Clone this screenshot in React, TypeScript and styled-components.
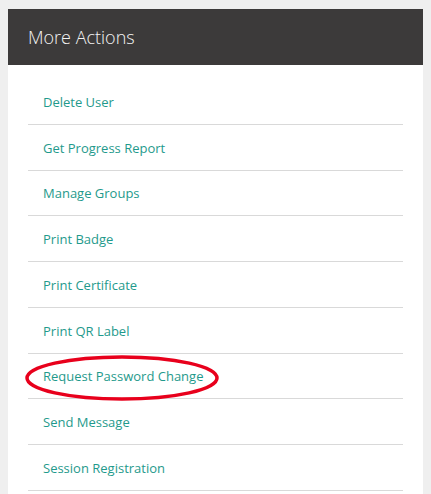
import React from 'react';
import styled, { createGlobalStyle } from 'styled-components';

const actions = [
    "Delete User",
    "Get Progress Report",
    "Manage Groups",
    "Print Badge",
    "Print Certificate",
    "Print QR Label",
    "Request Password Change",
    "Send Message",
    "Session Registration",
];

const highlighted = "Request Password Change";

export default function App() {
    return (
        <>
            <GlobalStyle />
            <SPanel>
                <SPanelHeader>More Actions</SPanelHeader>
                <SActionList>
                    {actions.map((name) => (
                        <SActionItem key={name}>
                            <SActionLink href="#">{name}</SActionLink>
                            {name === highlighted && (
                                <SCircle viewBox="0 0 194 46" preserveAspectRatio="none">
                                    <ellipse cx="97" cy="23" rx="95" ry="21" fill="none" stroke="#e8001c" strokeWidth="3.5" />
                                </SCircle>
                            )}
                        </SActionItem>
                    ))}
                </SActionList>
            </SPanel>
        </>
    );
}

const GlobalStyle = createGlobalStyle`
    html, body {
        margin: 0;
        padding: 0;
        background-color: #efefef;
        font-family: "Open Sans", "Noto Sans", sans-serif;
    }
    body {
        padding: 9px 8px 0 8px;
    }
`;

const SPanel = styled.div`
    background-color: #ffffff;
    width: 415px;
    height: 485px;
    overflow: hidden;
`;

const SPanelHeader = styled.div`
    background-color: #3c3a3a;
    color: #f4f4f4;
    height: 56px;
    display: flex;
    align-items: center;
    padding-left: 20px;
    font-size: 18px;
    font-weight: 300;
`;

const SActionList = styled.ul`
    list-style: none;
    margin: 0;
    padding: 14px 20px 0 20px;
`;

const SActionItem = styled.li`
    position: relative;
    box-sizing: border-box;
    height: 45.75px;
    border-bottom: 1px solid #d9d9d9;
    display: flex;
    align-items: center;
    padding-left: 15px;
    padding-top: 1px;
`;

const SActionLink = styled.a`
    color: #1f9a8c;
    text-decoration: none;
    font-size: 13px;
`;

const SCircle = styled.svg`
    position: absolute;
    left: -3px;
    top: 1px;
    width: 194px;
    height: 46px;
    overflow: visible;
    pointer-events: none;
`;
